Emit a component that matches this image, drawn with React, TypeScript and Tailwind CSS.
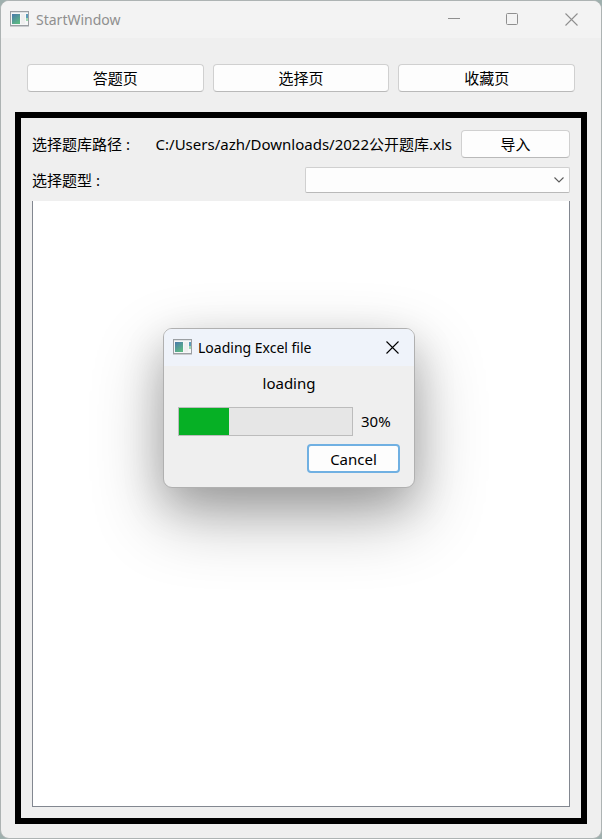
import React from "react";

function AppIcon() {
  return (
    <svg width="19" height="17" viewBox="0 0 19 17" shapeRendering="crispEdges" aria-hidden="true">
      <defs>
        <linearGradient id="pane" x1="0" y1="0" x2="0.6" y2="1">
          <stop offset="0" stopColor="#4a78ac" />
          <stop offset="1" stopColor="#5cb884" />
        </linearGradient>
      </defs>
      <rect x="0.5" y="0.5" width="18" height="14" fill="#f6f7f8" stroke="#9b9fa3" />
      <rect x="1" y="1" width="17" height="1" fill="#dfe2e4" />
      <rect x="2" y="3" width="8" height="10" fill="url(#pane)" />
      <rect x="11" y="3" width="4" height="10" fill="#efefef" />
      <rect x="16" y="3" width="2" height="4" fill="#5c9bb8" />
      <rect x="16" y="7" width="2" height="3" fill="#9ed8b0" />
      <rect x="0" y="15" width="19" height="1" fill="#c9cccf" />
    </svg>
  );
}

function CloseIcon() {
  return (
    <svg width="13" height="13" viewBox="0 0 13 13" fill="none" stroke="currentColor" aria-hidden="true">
      <path d="M0.5 0.5 L12.5 12.5 M12.5 0.5 L0.5 12.5" strokeWidth="1.1" />
    </svg>
  );
}

const pushButton =
  "h-7 rounded-[4px] border border-[#d0d0d0] border-b-[#b9b9b9] bg-[#fdfdfd] text-center leading-5";

export default function App() {
  return (
    <div className="min-h-screen bg-[#9fb0ae] font-['Noto_Sans','Noto_Sans_CJK_SC',sans-serif] text-[15px] text-black">
      <main className="relative flex min-h-screen flex-col overflow-hidden rounded-[9px] border border-[#adb3b3] bg-[#efefef]">
        <header className="flex h-[37px] items-center bg-[#f3f3f3] pl-[9px] text-[#8f8f8f]">
          <AppIcon />
          <h1 className="ml-[7px] flex-1 text-[14px] leading-5">StartWindow</h1>
          <div className="flex h-full">
            <button aria-label="Minimize" className="flex w-[58px] items-center justify-center">
              <svg width="12" height="13" viewBox="0 0 12 13" aria-hidden="true">
                <path d="M0 5.5 H12" stroke="currentColor" />
              </svg>
            </button>
            <button aria-label="Maximize" className="flex w-[58px] items-center justify-center">
              <svg width="12" height="13" viewBox="0 0 12 13" fill="none" aria-hidden="true">
                <rect x="0.5" y="0.5" width="11" height="11" rx="1" stroke="currentColor" />
              </svg>
            </button>
            <button aria-label="Close" className="flex w-[60px] items-center justify-center">
              <CloseIcon />
            </button>
          </div>
        </header>

        <nav className="grid grid-cols-3 gap-[9px] px-[26px] pt-[26px] pb-5">
          <button className={pushButton}>答题页</button>
          <button className={pushButton}>选择页</button>
          <button className={pushButton}>收藏页</button>
        </nav>

        <section className="mx-[14px] mb-[14px] flex flex-1 flex-col border-[6px] border-black px-[11px] pt-3 pb-[11px]">
          <div className="flex h-7 items-center leading-5">
            <span className="whitespace-nowrap">选择题库路径 :</span>
            <span className="ml-auto whitespace-nowrap">C:/Users/azh/Downloads/2022公开题库.xls</span>
            <button className={`${pushButton} ml-[9px] w-[109px]`}>导入</button>
          </div>
          <div className="mt-2 flex h-7 items-center justify-between leading-5">
            <label htmlFor="kind">选择题型 :</label>
            <div className="relative w-[265px]">
              <select
                id="kind"
                className="block h-[26px] w-full appearance-none rounded-[2px] border border-[#d0d0d0] border-b-[#b9b9b9] bg-[#fdfdfd]"
              />
              <svg
                className="pointer-events-none absolute top-[10px] right-[6px]"
                width="10"
                height="6"
                viewBox="0 0 10 6"
                fill="none"
                aria-hidden="true"
              >
                <path d="M0.5 0.5 L5 5 L9.5 0.5" stroke="#5c5c5c" strokeWidth="1.1" />
              </svg>
            </div>
          </div>
          <div className="mt-[7px] flex-1 border border-t-0 border-[#828790] bg-white" />
        </section>

        <div
          role="dialog"
          aria-labelledby="dialog-title"
          className="absolute top-[327px] left-[162px] w-[252px] overflow-hidden rounded-[9px] border border-[#b0b0b0] bg-[#efefef] shadow-[0_28px_70px_rgba(0,0,0,0.3),0_16px_40px_rgba(0,0,0,0.18)]"
        >
          <div className="flex h-[37px] items-center bg-[#eff3fa] pr-[15px] pl-[9px]">
            <AppIcon />
            <h2 id="dialog-title" className="ml-[6px] flex-1 text-[14px] leading-5">
              Loading Excel file
            </h2>
            <button aria-label="Close dialog">
              <CloseIcon />
            </button>
          </div>
          <div className="px-[14px] pt-[7px] pb-[14px]">
            <p id="dialog-status" className="text-center leading-5">loading</p>
            <div className="mt-[14px] flex items-center">
              <div
                role="progressbar"
                aria-labelledby="dialog-status"
                aria-valuenow={30}
                aria-valuemin={0}
                aria-valuemax={100}
                className="h-[29px] w-[175px] border border-[#bcbcbc] bg-[#e6e6e6]"
              >
                <div className="h-full bg-[#06b025]" style={{ width: "29%" }} />
              </div>
              <span className="ml-2">30%</span>
            </div>
            <div className="mt-2 flex justify-end">
              <button className="h-[29px] w-[93px] rounded-[4px] border-2 border-[#70b0e2] bg-[#fdfdfd] leading-5">
                Cancel
              </button>
            </div>
          </div>
        </div>
      </main>
    </div>
  );
}
